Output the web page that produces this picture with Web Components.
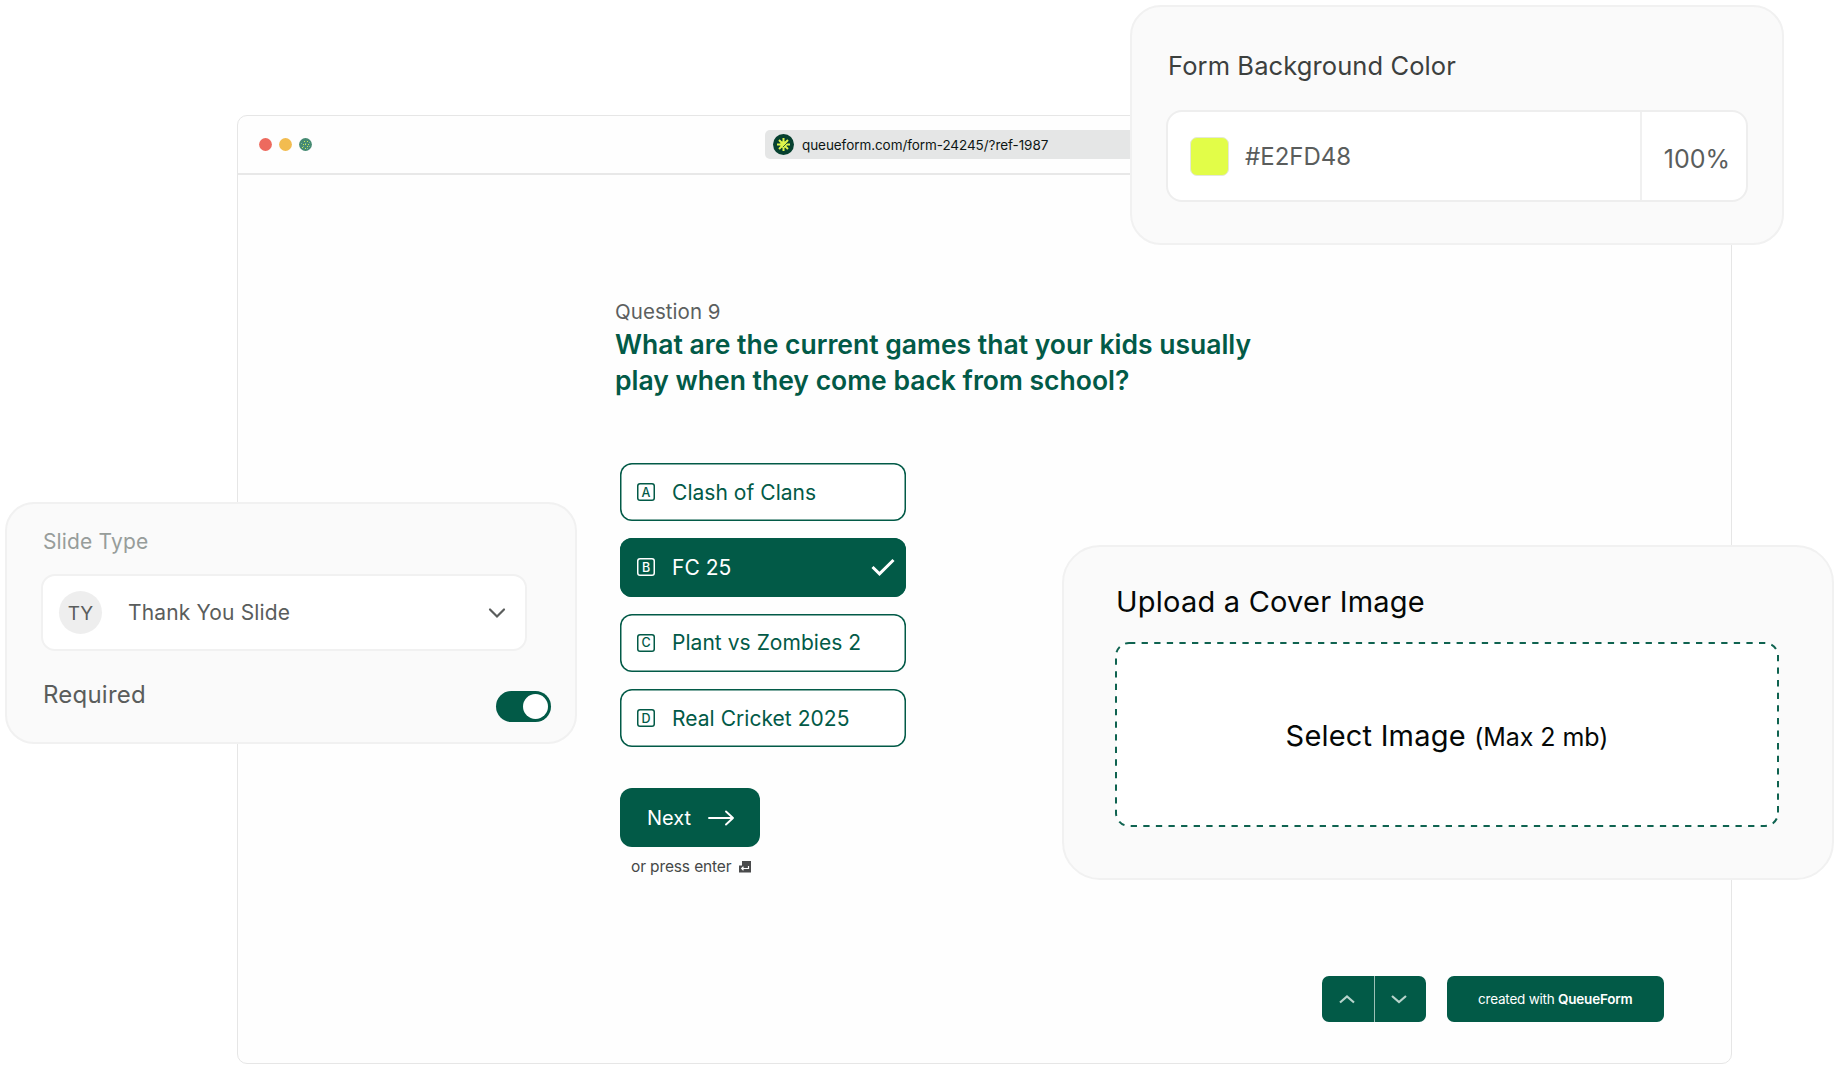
<!DOCTYPE html>
<html lang="en">
<head>
<meta charset="utf-8">
<title>QueueForm</title>
<style>
  body {
    margin: 0;
    position: relative;
    width: 1838px;
    height: 1065px;
    overflow: hidden;
    background: #fff;
    font-family: Inter, "Liberation Sans", sans-serif;
    --green: #025a47;
    --panel: #fafafa;
    --line: #e6e6e6;
    --edge: #f1f1f1;
  }
  /* overlapping windows on the canvas */
  browser-window, floating-card { position: absolute; }
  browser-window { left: 237px; top: 115px; width: 1495px; height: 949px; }
  #color { left: 1130px; top: 5px; width: 654px; height: 240px; padding: 43px 34px 0 35px; border-radius: 31px; }
  #slide { left: 5px; top: 502px; width: 572px; height: 242px; padding: 25px 24px 0 35px; border-radius: 29px; }
  #upload { left: 1062px; top: 545px; width: 772px; height: 335px; padding: 35px 53px 0 51px; border-radius: 38px; }
</style>
</head>
<body>
  <browser-window url="queueform.com/form-24245/?ref-1987">
    <form-question number="9">
      What are the current games that your kids usually<br>play when they come back from school?
      <choice-option slot="choices" key="A">Clash of Clans</choice-option>
      <choice-option slot="choices" key="B" selected>FC 25</choice-option>
      <choice-option slot="choices" key="C">Plant vs Zombies 2</choice-option>
      <choice-option slot="choices" key="D">Real Cricket 2025</choice-option>
    </form-question>
    <form-footer slot="footer">created with <b>QueueForm</b></form-footer>
  </browser-window>

  <floating-card id="color">
    <color-field label="Form Background Color" value="#E2FD48" opacity="100%"></color-field>
  </floating-card>

  <floating-card id="slide">
    <slide-select label="Slide Type" short="TY">Thank You Slide</slide-select>
    <toggle-switch>Required</toggle-switch>
  </floating-card>

  <floating-card id="upload">
    <cover-upload label="Upload a Cover Image" limit="(Max 2 mb)">Select Image</cover-upload>
  </floating-card>

<script>
class BaseElement extends HTMLElement {
  constructor() {
    super();
    const template = document.createElement("template");
    template.innerHTML = `<style>
      :host { display: block; box-sizing: border-box; }
      * { box-sizing: border-box; }
      svg { display: block; flex: none; fill: none; }
    </style>` + this.render();
    this.attachShadow({ mode: "open" }).append(template.content.cloneNode(true));
  }
}

customElements.define("browser-window", class extends BaseElement {
  render() {
    return `
      <style>
        :host {
          display: flex;
          flex-direction: column;
          background: #fefefe;
          border: 1px solid var(--line);
          border-radius: 10px;
        }
        header {
          flex: none;
          height: 59px;
          display: flex;
          align-items: center;
          border-bottom: 2px solid #e8e8e8;
          padding-left: 20.5px;
        }
        .dots { display: flex; gap: 7px; width: 506.5px; }
        .url {
          display: flex;
          align-items: center;
          gap: 8px;
          width: 460px;
          height: 29px;
          padding-left: 8px;
          border-radius: 5px;
          background: #e5e6e6;
          font-size: 13.5px;
          letter-spacing: -0.07px;
          color: #0d1614;
        }
        main { flex: 1; padding: 119px 0 0 377px; }
        footer { display: flex; justify-content: flex-end; padding: 0 67.5px 41px 0; }
      </style>
      <header>
        <div class="dots">
          <svg width="13" height="13"><circle cx="6.5" cy="6.5" r="6.4" fill="#ed6a5e"/></svg>
          <svg width="13" height="13"><circle cx="6.5" cy="6.5" r="6.4" fill="#f2bc50"/></svg>
          <svg width="13" height="13">
            <circle cx="6.5" cy="6.5" r="6.4" fill="#468a72"/>
            <path d="M5 3.5h1M8 3.5h1M4 6.5h1M6 6.5h1M9 6.5h1M8 8.5h1M3 9.5h1M6 10.5h1" stroke="#c8e85a"/>
            <path d="M2 5.5h1M6 5.5h1M10 4.5h1M4 8.5h1M10 8.5h1M8 10.5h1" stroke="#7fb39d"/>
          </svg>
        </div>
        <div class="url">
          <svg width="21" height="21" viewBox="0 0 21 21">
            <circle cx="10.5" cy="10.5" r="10.5" fill="#06402f"/>
            <path d="M10.5 4v13M4 10.5h13M6 6l9 9M15 6l-9 9" stroke="#dff54b" stroke-width="2"/>
            <circle cx="10.5" cy="10.5" r="3.2" fill="#dff54b"/>
            <path d="M10 13l4-4" stroke="#06402f" stroke-width=".8"/>
          </svg>
          <span>${this.getAttribute("url")}</span>
        </div>
      </header>
      <main><slot></slot></main>
      <footer><slot name="footer"></slot></footer>`;
  }
});

customElements.define("form-question", class extends BaseElement {
  render() {
    return `
      <style>
        .number { font-size: 20.5px; line-height: 36px; letter-spacing: 0.05px; color: #5c5f5e; }
        h1 {
          margin: -4px 0 0;
          font-size: 26.5px;
          font-weight: 600;
          line-height: 36px;
          letter-spacing: 0;
          color: var(--green);
          white-space: nowrap;
        }
        .choices {
          display: flex;
          flex-direction: column;
          gap: 17.2px;
          width: 286px;
          margin: 65px 0 41px 5px;
        }
        .next {
          display: flex;
          align-items: center;
          gap: 16px;
          width: 140px;
          height: 58.5px;
          margin-left: 5px;
          padding-left: 27px;
          border-radius: 12px;
          background: var(--green);
          color: #fff;
          font-size: 20px;
        }
        .hint {
          display: flex;
          align-items: center;
          gap: 8px;
          margin: 8px 0 0 16px;
          font-size: 15.5px;
          line-height: 24px;
          letter-spacing: -0.13px;
          color: #454847;
        }
      </style>
      <div class="number">Question ${this.getAttribute("number")}</div>
      <h1><slot></slot></h1>
      <div class="choices"><slot name="choices"></slot></div>
      <div class="next">
        <span>Next</span>
        <svg width="28" height="18" stroke="#fff" stroke-width="1.9" stroke-linecap="round" stroke-linejoin="round"><path d="M2 9h24M19 2.5L26 9l-7 6.5"/></svg>
      </div>
      <div class="hint">
        <span>or press enter</span>
        <svg width="12" height="12"><path d="M3 0h9v11.5H0V4.500h3z" fill="#4a4b4c"/><path d="M9.500 5v2.500H3M4.500 5.800L2.700 7.500l1.800 1.700" stroke="#fff" stroke-width="1.200"/></svg>
      </div>`;
  }
});

customElements.define("choice-option", class extends BaseElement {
  render() {
    return `
      <style>
        :host {
          display: flex;
          align-items: center;
          height: 58.2px;
          padding: 0 11px 0 17px;
          box-shadow: inset 0 0 0 1.5px var(--green);
          border-radius: 12px;
          background: #fff;
          color: var(--green);
          font-size: 21px;
          font-weight: 400;
          letter-spacing: 0.04px;
        }
        :host([selected]) { background: var(--green); color: #fff; }
        .key {
          display: grid;
          place-items: center;
          width: 18px;
          height: 18px;
          margin-right: 17px;
          box-shadow: inset 0 0 0 1.5px currentColor;
          border-radius: 3px;
          font-size: 12.5px;
          font-weight: 500;
          line-height: 15px;
          letter-spacing: 0;
        }
        .label { flex: 1; }
        svg { display: none; }
        :host([selected]) svg { display: block; }
      </style>
      <span class="key">${this.getAttribute("key")}</span>
      <span class="label"><slot></slot></span>
      <svg width="24" height="20" stroke="#fff" stroke-width="3"><path d="M1.500 10l7 6.800L22.500 3"/></svg>`;
  }
});

customElements.define("form-footer", class extends BaseElement {
  render() {
    return `
      <style>
        :host { display: flex; gap: 21px; color: #fff; }
        .nav { display: flex; width: 104px; height: 46px; border-radius: 7px; overflow: hidden; background: var(--green); }
        .nav span { width: 52px; display: grid; place-items: center; padding-right: 2px; }
        .nav span + span { border-left: 1px solid #9cc0b6; padding-right: 3px; }
        .brand {
          display: grid;
          place-items: center;
          width: 216.5px;
          height: 46px;
          border-radius: 7px;
          background: var(--green);
          font-size: 13.5px;
          letter-spacing: -0.22px;
        }
        ::slotted(b) { font-weight: 600; }
      </style>
      <div class="nav">
        <span><svg width="16" height="10" stroke="#b7d3cb" stroke-width="2.2"><path d="M1 8.500l7-6 7 6"/></svg></span>
        <span><svg width="16" height="10" stroke="#b7d3cb" stroke-width="2.2"><path d="M1 2l7 6 7-6"/></svg></span>
      </div>
      <div class="brand"><div><slot></slot></div></div>`;
  }
});

customElements.define("floating-card", class extends BaseElement {
  render() {
    return `
      <style>
        :host { background: var(--panel); border: 2px solid var(--edge); }
      </style>
      <slot></slot>`;
  }
});

customElements.define("color-field", class extends BaseElement {
  render() {
    const value = this.getAttribute("value");
    return `
      <style>
        .title { font-size: 25.5px; line-height: 31px; letter-spacing: 0.1px; color: #3c403e; padding-left: 1px; }
        .field {
          display: flex;
          height: 92px;
          margin: 29px 0 0 -1px;
          border: 2px solid #eeeeee;
          border-radius: 16px;
          background: #fff;
          color: #5a5d5c;
        }
        .value { flex: 1; display: flex; align-items: center; gap: 16px; padding: 0 0 0 22px; font-size: 24px; }
        .swatch { width: 39px; height: 39px; border: 1px solid #e4e8d8; border-radius: 7px; background: ${value}; }
        .alpha { width: 106px; display: grid; place-items: center; padding: 5px 0 0 6px; border-left: 2px solid #f0f0f0; font-size: 25px; }
      </style>
      <div class="title">${this.getAttribute("label")}</div>
      <div class="field">
        <div class="value"><span class="swatch"></span><span>${value}</span></div>
        <div class="alpha">${this.getAttribute("opacity")}</div>
      </div>`;
  }
});

customElements.define("slide-select", class extends BaseElement {
  render() {
    return `
      <style>
        .title { font-size: 21px; line-height: 26px; letter-spacing: 0.15px; color: #979d9a; padding-left: 1px; }
        .field {
          display: flex;
          align-items: center;
          width: 486px;
          height: 77px;
          margin: 19px 0 0 -1px;
          padding: 0 19px 0 16px;
          border: 2px solid var(--edge);
          border-radius: 14px;
          background: #fff;
          color: #5a5d5c;
          font-size: 21px;
        }
        .badge { display: grid; place-items: center; width: 43px; height: 43px; padding-top: 2px; border-radius: 50%; background: #eeeeee; font-size: 19px; margin-right: 26px; }
        .text { flex: 1; letter-spacing: 0.15px; }
      </style>
      <div class="title">${this.getAttribute("label")}</div>
      <div class="field">
        <span class="badge">${this.getAttribute("short")}</span>
        <span class="text"><slot></slot></span>
        <svg width="18" height="12" stroke="#5a5d5c" stroke-width="2.2" stroke-linecap="round"><path d="M2 2.500l7 7 7-7"/></svg>
      </div>`;
  }
});

customElements.define("toggle-switch", class extends BaseElement {
  render() {
    return `
      <style>
        :host {
          display: flex;
          justify-content: space-between;
          margin-top: 29px;
          padding-left: 1px;
          font-size: 24px;
          line-height: 30px;
          letter-spacing: 0.22px;
          color: #5a5d5c;
        }
        .track { display: flex; justify-content: flex-end; width: 55px; height: 31px; margin-top: 11px; padding: 3px; border-radius: 16px; background: var(--green); }
        .knob { width: 25px; height: 25px; border-radius: 50%; background: #fff; }
      </style>
      <slot></slot>
      <span class="track"><span class="knob"></span></span>`;
  }
});

customElements.define("cover-upload", class extends BaseElement {
  render() {
    return `
      <style>
        .title { font-size: 29px; line-height: 40px; letter-spacing: 0.22px; color: #050807; padding-left: 1px; }
        .drop { display: grid; width: 664px; height: 185px; margin-top: 20px; }
        .drop > * { grid-area: 1 / 1; }
        .drop div { place-self: center; padding-top: 2px; font-size: 29px; font-weight: 400; letter-spacing: 0.2px; color: #050807; }
        small { font-size: 25px; letter-spacing: -0.05px; }
      </style>
      <div class="title">${this.getAttribute("label")}</div>
      <div class="drop">
        <svg width="664" height="185"><rect x="1" y="1" width="662" height="183" rx="13" fill="#fff" stroke="#0f6350" stroke-width="2" stroke-dasharray="6.300 6.300"/></svg>
        <div><slot></slot> <small>${this.getAttribute("limit")}</small></div>
      </div>`;
  }
});
</script>
</body>
</html>
